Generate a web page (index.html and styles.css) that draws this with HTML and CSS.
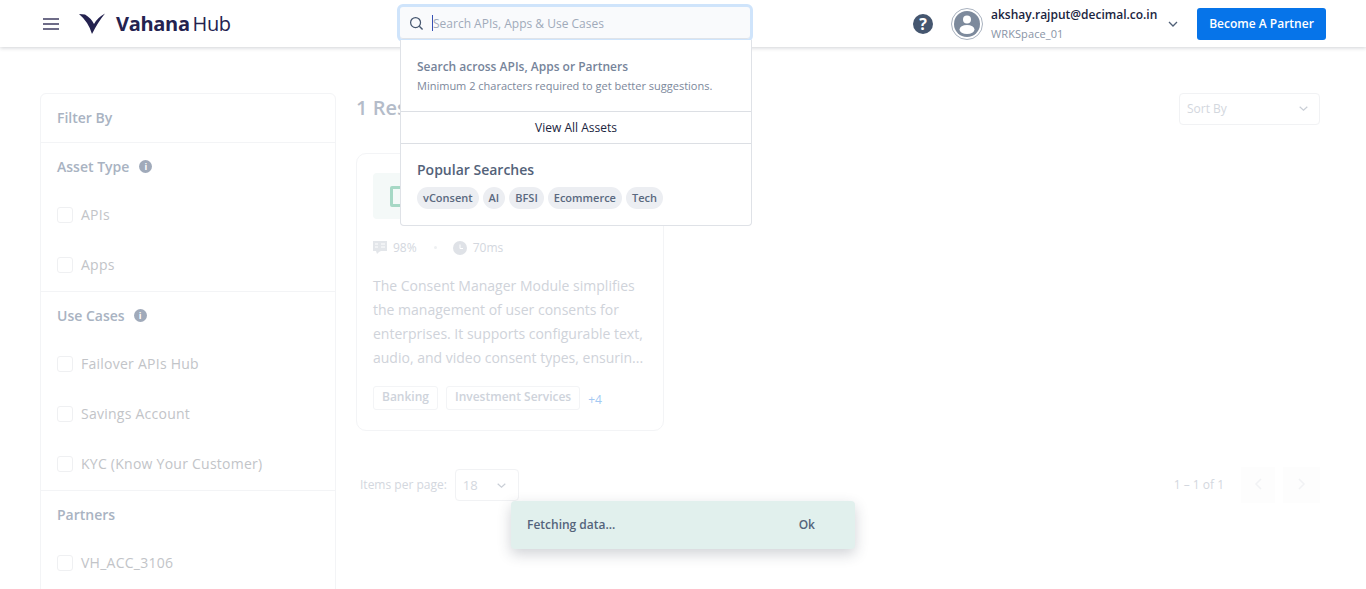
FILE: index.html
```html
<!DOCTYPE html>
<html>
  <head>
    <meta charset="utf-8">
    <title>Vahana Hub</title>
    <link rel="stylesheet" href="styles.css">
  </head>
  <body>
    <header class="topbar">
      <div class="topbar-left">
        <svg class="menu-icon" width="16" height="12" viewBox="0 0 16 12"><path d="M0 1h16M0 6h16M0 11h16" stroke="#3f3d62" stroke-width="1.400" fill="none"/></svg>
        <svg class="logo-mark" width="28" height="22" viewBox="0 0 28 22"><path d="M0 1 L6 1.500 Q12 5 15 11 Q18 5 26 .5 Q19 9 13 21 Q9.500 9 0 1Z" fill="#24224f"/></svg>
        <div class="logo-text"><b>Vahana</b> Hub</div>
      </div>
      <div class="topbar-right">
        <svg class="help-icon" width="20" height="20" viewBox="0 0 20 20"><circle cx="10" cy="10" r="10" fill="#45566f"/><text x="10" y="15.500" text-anchor="middle" class="help-mark">?</text></svg>
        <svg class="avatar" width="32" height="32" viewBox="0 0 32 32"><circle cx="16" cy="16" r="15.500" fill="#fff" stroke="#a9b2bf"/><circle cx="16" cy="16" r="13" fill="#7d8a9c"/><circle cx="16" cy="11.500" r="4" fill="#fff"/><ellipse cx="16" cy="21.500" rx="7.500" ry="4.500" fill="#fff"/></svg>
        <div class="user">
          <div class="user-mail">akshay.rajput@decimal.co.in</div>
          <div class="user-space">WRKSpace_01</div>
        </div>
        <svg class="user-caret" width="10" height="6" viewBox="0 0 10 6"><path d="M1 1l4 4 4-4" stroke="#4f5f76" stroke-width="1.300" fill="none"/></svg>
        <button class="partner-btn">Become A Partner</button>
      </div>
    </header>

    <div class="page">
      <aside class="filters">
        <div class="filter-title">Filter By</div>
        <section class="filter-group">
          <h4>Asset Type <i class="info info-wide">i</i></h4>
          <label class="check"><span class="box"></span>APIs</label>
          <label class="check"><span class="box"></span>Apps</label>
        </section>
        <section class="filter-group">
          <h4>Use Cases <i class="info">i</i></h4>
          <label class="check"><span class="box"></span>Failover APIs Hub</label>
          <label class="check"><span class="box"></span>Savings Account</label>
          <label class="check"><span class="box"></span>KYC (Know Your Customer)</label>
        </section>
        <section class="filter-group">
          <h4>Partners</h4>
          <label class="check"><span class="box"></span>VH_ACC_3106</label>
        </section>
      </aside>

      <main class="results">
        <div class="results-head">
          <div class="results-count">1 Results</div>
          <div class="select sort-select">Sort By
            <svg width="9" height="5" viewBox="0 0 9 5"><path d="M.7.7l3.800 3.400L8.300.7" stroke="#c9ced6" stroke-width="1.200" fill="none"/></svg>
          </div>
        </div>

        <article class="card">
          <div class="card-tile"><span class="card-tile-icon"></span></div>
          <div class="card-stats">
            <svg width="14" height="14" viewBox="0 0 14 14"><path d="M0 0h14v10H8l-2 1-2 2-1-3H0z" fill="#e3e6ea"/><path d="M2 3h3M2 6h3M8 3h4M8 6h4" stroke="#fff"/></svg>
            <span>98%</span>
            <span class="dot"></span>
            <svg width="14" height="14" viewBox="0 0 14 14"><circle cx="7" cy="7" r="7" fill="#dfe2e7"/><path d="M7 3.500V7.500H10" stroke="#fff" fill="none"/></svg>
            <span>70ms</span>
          </div>
          <p class="card-desc">The Consent Manager Module simplifies the management of user consents for enterprises. It supports configurable text, audio, and video consent types, ensurin...</p>
          <div class="card-tags">
            <span class="tag">Banking</span>
            <span class="tag">Investment Services</span>
            <span class="more">+4</span>
          </div>
        </article>

        <div class="pager">
          <div class="pager-size">
            <span class="pager-label">Items per page:</span>
            <div class="select size-select">18
              <svg width="9" height="5" viewBox="0 0 9 5"><path d="M.7.7l3.800 3.400L8.300.7" stroke="#c9ced6" stroke-width="1.200" fill="none"/></svg>
            </div>
          </div>
          <div class="pager-nav">
            <span class="pager-label">1 – 1 of 1</span>
            <button class="nav-btn nav-prev"><svg width="8" height="12" viewBox="0 0 8 12"><path d="M7 1L2 6l5 5" stroke="#f1f2f4" stroke-width="1.500" fill="none"/></svg></button>
            <button class="nav-btn nav-next"><svg width="8" height="12" viewBox="0 0 8 12"><path d="M1 1l5 5-5 5" stroke="#f1f2f4" stroke-width="1.500" fill="none"/></svg></button>
          </div>
        </div>
      </main>
    </div>

    <div class="search">
      <div class="search-box">
        <svg width="15" height="15" viewBox="0 0 16 16"><circle cx="7" cy="7" r="5.300" stroke="#45566f" stroke-width="1.300" fill="none"/><path d="M11 11l3.500 3.500" stroke="#45566f" stroke-width="1.500"/></svg>
        <span class="caret"></span>
        <span class="search-hint">Search APIs, Apps &amp; Use Cases</span>
      </div>
      <div class="search-panel">
        <div class="search-help">
          <div class="help-title">Search across APIs, Apps or Partners</div>
          <div class="help-sub">Minimum 2 characters required to get better suggestions.</div>
        </div>
        <div class="view-all">View All Assets</div>
        <div class="popular">
          <div class="popular-title">Popular Searches</div>
          <div class="chips">
            <span class="chip">vConsent</span>
            <span class="chip">AI</span>
            <span class="chip">BFSI</span>
            <span class="chip">Ecommerce</span>
            <span class="chip">Tech</span>
          </div>
        </div>
      </div>
    </div>

    <div class="toast">
      <span class="toast-text">Fetching data...</span>
      <span class="toast-ok">Ok</span>
    </div>
  </body>
</html>
```

FILE: styles.css
```css
html, body {
  margin: 0;
  height: 589px;
  overflow: hidden;
  background: #fff;
  font-family: "Open Sans", "Noto Sans", sans-serif;
}
.topbar {
  height: 47px;
  display: flex;
  justify-content: space-between;
  align-items: center;
  box-sizing: border-box;
  padding: 0 40px 0 43px;
  box-shadow: 0 1px 4px rgba(40, 50, 70, .22);
}
.topbar-left, .topbar-right {
  display: flex;
  align-items: center;
}
.logo-mark {
  margin-left: 20px;
}
.logo-text {
  margin-left: 9px;
  font-size: 20px;
  color: #24224f;
  letter-spacing: -.4px;
  word-spacing: -2px;
}
.logo-text b {
  font-weight: 700;
  letter-spacing: -.3px;
}
.help-mark {
  font: 700 16px "Open Sans", sans-serif;
  fill: #fff;
}
.avatar {
  margin-left: 18px;
}
.user {
  margin-left: 8px;
  width: 173px;
}
.user-mail {
  font-size: 12px;
  line-height: 17px;
  font-weight: 600;
  color: #1a2440;
}
.user-space {
  font-size: 11px;
  line-height: 16px;
  margin-top: 3px;
  color: #8994a6;
  letter-spacing: .1px;
}
.user-caret {
  margin-left: 4px;
}
.partner-btn {
  margin-left: 19px;
  width: 129px;
  height: 32px;
  border: 0;
  border-radius: 3px;
  background: #0674e9;
  color: #fff;
  font: 600 12px "Open Sans", sans-serif;
}

.page {
  display: flex;
  align-items: flex-start;
  gap: 20px;
  padding: 46px 46px 0 40px;
}
.filters {
  flex: none;
  width: 296px;
  box-sizing: border-box;
  border: 1px solid #f3f4f6;
  border-radius: 6px;
}
.filter-title {
  height: 48px;
  box-sizing: border-box;
  padding: 14px 16px 0;
  font-size: 14px;
  font-weight: 600;
  line-height: 19px;
  color: #a9b3c2;
}
.filter-group {
  border-top: 1px solid #f3f4f6;
  padding: 14px 16px 2px;
}
.filter-group:last-child {
  padding-bottom: 30px;
}
.filter-group h4 {
  margin: 0 0 13px;
  font-size: 14px;
  line-height: 19px;
  font-weight: 600;
  color: #a9b3c2;
  display: flex;
  align-items: center;
  gap: 9px;
}
.info {
  width: 13px;
  height: 13px;
  border-radius: 50%;
  background: #a0aaba;
  color: #fff;
  font: 700 9px/13px "Open Sans", sans-serif;
  text-align: center;
}
.info-wide {
  margin-left: 1px;
}
.check {
  height: 50px;
  display: flex;
  align-items: center;
  gap: 8px;
  font-size: 14px;
  letter-spacing: .25px;
  color: #c2c4c8;
}
.box {
  width: 14px;
  height: 14px;
  margin-top: 1px;
  border: 1px solid #eff0f2;
  border-radius: 3px;
}

.results {
  flex: 1;
  min-width: 0;
}
.results-head {
  display: flex;
  justify-content: space-between;
  align-items: center;
  height: 32px;
}
.results-count {
  font-size: 20px;
  font-weight: 600;
  color: #b4bcc9;
  padding-bottom: 3px;
}
.select {
  box-sizing: border-box;
  height: 32px;
  border: 1px solid #f1f2f4;
  border-radius: 4px;
  display: flex;
  align-items: center;
  justify-content: space-between;
  color: #d3d7de;
  font-size: 12px;
}
.sort-select {
  width: 141px;
  padding: 0 11px 2px 7px;
}
.card {
  width: 308px;
  height: 278px;
  box-sizing: border-box;
  margin-top: 28px;
  border: 1px solid #f3f4f6;
  border-radius: 10px;
  padding: 19px 16px 0;
}
.card-tile {
  width: 100px;
  height: 46px;
  border-radius: 4px;
  background: #f4f9f8;
  display: flex;
  align-items: center;
  padding-left: 17px;
}
.card-tile-icon {
  width: 16px;
  height: 15px;
  border: 3px solid #a6d8c5;
  border-radius: 2px;
}
.card-stats {
  margin-top: 20px;
  height: 17px;
  display: flex;
  align-items: center;
  gap: 6px;
  font-size: 12px;
  color: #d3d7de;
}
.dot {
  width: 3px;
  height: 3px;
  border-radius: 50%;
  background: #eef0f2;
  margin: 0 10px 0 11px;
}
.card-desc {
  margin: 18px 0 0;
  font-size: 14px;
  line-height: 24px;
  color: #cfd3da;
}
.card-tags {
  margin-top: 16px;
  display: flex;
  align-items: center;
  gap: 8px;
}
.tag {
  height: 24px;
  box-sizing: border-box;
  border: 1px solid #f3f4f6;
  border-radius: 3px;
  padding: 0 8px;
  font-size: 12px;
  font-weight: 600;
  line-height: 20px;
  color: #ced3db;
}
.more {
  font-size: 12px;
  color: #a3c9f3;
  margin: 3px 0 0;
}
.pager {
  margin-top: 36px;
  display: flex;
  justify-content: space-between;
  align-items: center;
  padding-left: 4px;
  font-size: 12px;
  color: #d3d7de;
}
.pager-size, .pager-nav {
  display: flex;
  align-items: center;
}
.pager-label {
  padding-bottom: 2px;
}
.size-select {
  width: 64px;
  margin-left: 8px;
  padding: 0 12px 0 7px;
  font-size: 13px;
}
.pager-nav .pager-label {
  margin-right: 17px;
}
.nav-btn {
  height: 36px;
  border: 0;
  background: #fdfdfd;
  padding: 0;
}
.nav-prev {
  width: 34px;
}
.nav-next {
  width: 37px;
  margin-left: 8px;
}

.search {
  position: absolute;
  left: 397px;
  top: 4px;
  width: 356px;
}
.search-box {
  box-sizing: border-box;
  height: 38px;
  border: 3px solid #cfe4fb;
  border-radius: 6px;
  background: #f9fafc;
  box-shadow: inset 0 -1px 0 #dfe3e9;
  display: flex;
  align-items: center;
  padding-left: 9px;
}
.caret {
  width: 1px;
  height: 16px;
  background: #3651b5;
  margin-left: 8px;
}
.search-hint {
  font-size: 12px;
  color: #a0aaba;
}
.search-panel {
  box-sizing: border-box;
  width: 352px;
  margin: -2px 0 0 3px;
  background: #fff;
  border: 1px solid #dfe2e7;
  border-top: 0;
  border-radius: 0 0 4px 4px;
}
.search-help {
  height: 72px;
  box-sizing: border-box;
  padding: 18px 16px 0;
  border-bottom: 1px solid #dcdfe4;
}
.help-title {
  font-size: 12px;
  line-height: 17px;
  font-weight: 600;
  color: #76849a;
}
.help-sub {
  margin-top: 3px;
  font-size: 11px;
  line-height: 16px;
  color: #7c889b;
}
.view-all {
  height: 32px;
  box-sizing: border-box;
  border-bottom: 1px solid #dcdfe4;
  font-size: 12px;
  line-height: 31px;
  text-align: center;
  color: #1a2440;
}
.popular {
  height: 81px;
  box-sizing: border-box;
  padding: 16px 16px 0;
}
.popular-title {
  font-size: 14px;
  line-height: 20px;
  font-weight: 600;
  color: #536279;
}
.chips {
  display: flex;
  gap: 4px;
  margin-top: 7px;
}
.chip {
  height: 22px;
  padding: 0 6px;
  border-radius: 11px;
  background: #eceef2;
  font-size: 11px;
  line-height: 22px;
  font-weight: 600;
  color: #5a697f;
}

.toast {
  position: absolute;
  left: 511px;
  top: 501px;
  width: 344px;
  height: 48px;
  box-sizing: border-box;
  padding: 0 40px 2px 16px;
  display: flex;
  justify-content: space-between;
  align-items: center;
  background: #e1f0ed;
  border-radius: 4px;
  box-shadow: 0 5px 14px rgba(40, 50, 70, .22);
  font-size: 12px;
  font-weight: 600;
  color: #54647b;
}
```
